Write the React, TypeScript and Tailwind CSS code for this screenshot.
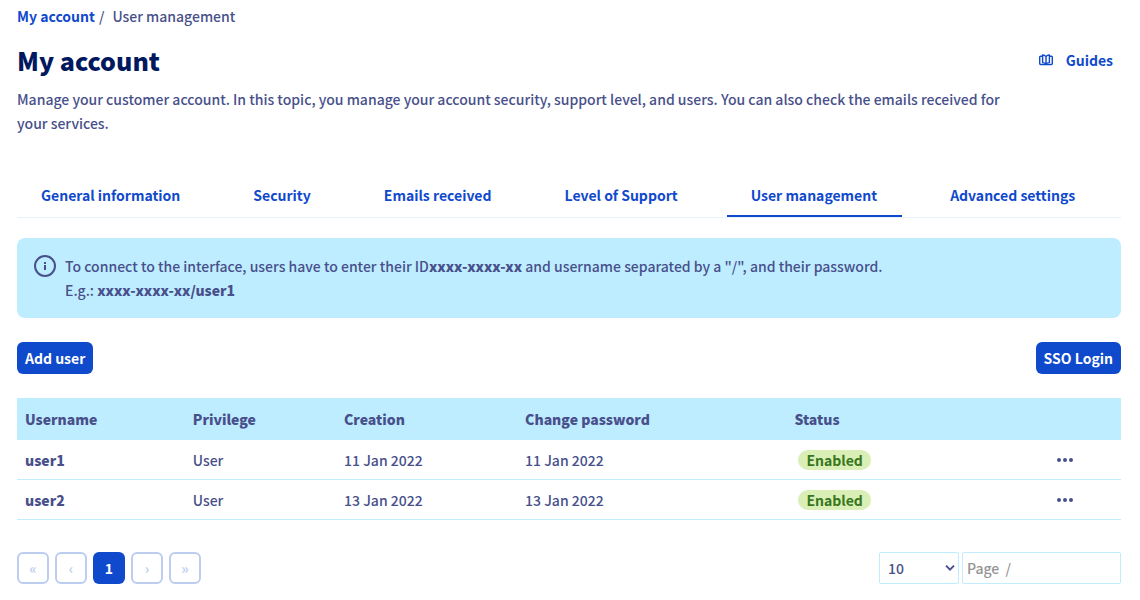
const tabs = [
  { label: "General information", active: false },
  { label: "Security", active: false },
  { label: "Emails received", active: false },
  { label: "Level of Support", active: false },
  { label: "User management", active: true },
  { label: "Advanced settings", active: false },
];

const users = [
  { name: "user1", privilege: "User", creation: "11 Jan 2022", changed: "11 Jan 2022", status: "Enabled" },
  { name: "user2", privilege: "User", creation: "13 Jan 2022", changed: "13 Jan 2022", status: "Enabled" },
];

function GuidesIcon() {
  return (
    <svg width="14" height="12" viewBox="0 0 14 12" fill="none" stroke="currentColor" strokeWidth="1.4" strokeLinejoin="round" aria-hidden="true">
      <path d="M3.4 2.2H1.6Q.7 2.2.7 3.1V9.6Q.7 10.5 1.6 10.5H12.4Q13.3 10.5 13.3 9.6V3.1Q13.3 2.2 12.4 2.2H10.6" />
      <path d="M7 2.6Q5.6.9 3.6 1V8.6Q5.8 8.6 7 10.2Q8.2 8.6 10.4 8.6V1Q8.4.9 7 2.6V10.2" />
    </svg>
  );
}

function InfoIcon() {
  return (
    <svg className="shrink-0" width="22" height="22" viewBox="0 0 22 22" fill="none" aria-hidden="true">
      <circle cx="11" cy="11" r="10" stroke="currentColor" strokeWidth="2" />
      <path d="M10 7h2v2h-2zM10 10h2v5h-2z" fill="currentColor" />
    </svg>
  );
}

function DotsIcon() {
  return (
    <svg width="16" height="4" viewBox="0 0 16 4" fill="currentColor" aria-hidden="true">
      <circle cx="2" cy="2" r="2" />
      <circle cx="8" cy="2" r="2" />
      <circle cx="14" cy="2" r="2" />
    </svg>
  );
}

function PageButton({ label, glyph }: { label: string; glyph: string }) {
  return (
    <button
      type="button"
      disabled
      aria-label={label}
      className="flex size-8 items-center justify-center rounded-md border-2 border-[#bccdf0] font-bold text-[#bccdf0]"
    >
      {glyph}
    </button>
  );
}

export default function App() {
  return (
    <main className="pt-1 pr-[19px] pb-4 pl-[17px] font-['Noto_Sans_CJK_SC',sans-serif] text-[14px] leading-6 font-medium text-[#48508b]">
      <nav aria-label="Breadcrumb" className="flex">
        <a href="#account" className="font-bold text-[#0f49cc]">My account</a>
        <span className="ml-1">/</span>
        <span className="ml-2">User management</span>
      </nav>

      <header className="mt-4 flex items-center justify-between pr-2">
        <h1 className="text-[25px] leading-8 font-black text-[#00185e]">My account</h1>
        <a href="#guides" className="flex items-center gap-[13px] font-bold text-[#0f49cc]">
          <GuidesIcon />
          Guides
        </a>
      </header>
      <p className="mt-[11px] max-w-[1000px]">
        Manage your customer account. In this topic, you manage your account security, support level, and users. You can also check the emails received for your services.
      </p>

      <nav aria-label="Account sections" className="mt-10 flex gap-6 border-b border-[#e6f1fb]">
        {tabs.map((tab) => (
          <a
            key={tab.label}
            href="#section"
            aria-current={tab.active ? "page" : undefined}
            className={
              tab.active
                ? "border-b-2 border-[#0f49cc] pt-2 pr-[25px] pb-2 pl-6 font-bold text-[#0f49cc]"
                : "border-b-2 border-transparent pt-2 pr-[25px] pb-2 pl-6 font-bold text-[#0f49cc]"
            }
          >
            {tab.label}
          </a>
        ))}
      </nav>

      <section className="mt-5 flex gap-[9px] rounded-lg bg-[#beedff] px-[17px] py-4">
        <div className="pt-px"><InfoIcon /></div>
        <p>
          To connect to the interface, users have to enter their ID<b className="font-black">xxxx-xxxx-xx</b> and username separated by a "/", and their password.
          <br />
          E.g.: <b className="font-black">xxxx-xxxx-xx/user1</b>
        </p>
      </section>

      <div className="mt-6 flex justify-between">
        <button type="button" className="h-8 rounded-md bg-[#0f49cc] px-2 font-bold text-white">Add user</button>
        <button type="button" className="h-8 rounded-md bg-[#0f49cc] px-2 font-bold text-white">SSO Login</button>
      </div>

      <table className="mt-6 w-full table-fixed border-separate border-spacing-0 text-left">
        <colgroup>
          <col className="w-[15.2%]" />
          <col className="w-[13.7%]" />
          <col className="w-[16.4%]" />
          <col className="w-[24.4%]" />
          <col className="w-[20.2%]" />
          <col />
        </colgroup>
        <thead>
          <tr className="h-[42px] bg-[#beedff]">
            <th scope="col" className="px-2 font-black">Username</th>
            <th scope="col" className="px-2 font-black">Privilege</th>
            <th scope="col" className="px-2 font-black">Creation</th>
            <th scope="col" className="px-2 font-black">Change password</th>
            <th scope="col" className="px-2 font-black">Status</th>
            <th scope="col" aria-label="Actions" />
          </tr>
        </thead>
        <tbody>
          {users.map((user) => (
            <tr key={user.name} className="h-10 *:border-b *:border-[#beedff]">
              <th scope="row" className="px-2 font-black">{user.name}</th>
              <td className="px-2">{user.privilege}</td>
              <td className="px-2">{user.creation}</td>
              <td className="px-2">{user.changed}</td>
              <td className="px-3">
                <span className="flex h-5 w-fit items-center rounded-full bg-[#d9efb5] px-2 font-bold text-[#38761d]">{user.status}</span>
              </td>
              <td>
                <button type="button" aria-label={`Actions for ${user.name}`} className="mx-auto flex h-8 w-8 items-center justify-center">
                  <DotsIcon />
                </button>
              </td>
            </tr>
          ))}
        </tbody>
      </table>

      <footer className="mt-8 flex justify-between">
        <nav aria-label="Pagination" className="flex gap-[6px]">
          <PageButton label="First page" glyph="«" />
          <PageButton label="Previous page" glyph="‹" />
          <button type="button" aria-current="page" className="size-8 rounded-md bg-[#0f49cc] font-bold text-white">1</button>
          <PageButton label="Next page" glyph="›" />
          <PageButton label="Last page" glyph="»" />
        </nav>
        <div className="flex gap-[3px]">
          <div className="relative">
            <select aria-label="Rows per page" defaultValue="10" className="h-8 w-20 appearance-none rounded-xs border border-[#beedff] bg-white px-2">
              <option>10</option>
              <option>25</option>
              <option>50</option>
            </select>
            <svg className="pointer-events-none absolute top-3 right-1" width="10" height="8" viewBox="0 0 10 8" fill="none" stroke="currentColor" strokeWidth="2" aria-hidden="true">
              <path d="M1 1.6L5 5.6L9 1.6" />
            </svg>
          </div>
          <input type="text" aria-label="Page number" placeholder="Page  /" className="h-8 w-[159px] rounded-xs border border-[#beedff] px-1 placeholder:text-[#949494]" />
        </div>
      </footer>
    </main>
  );
}
